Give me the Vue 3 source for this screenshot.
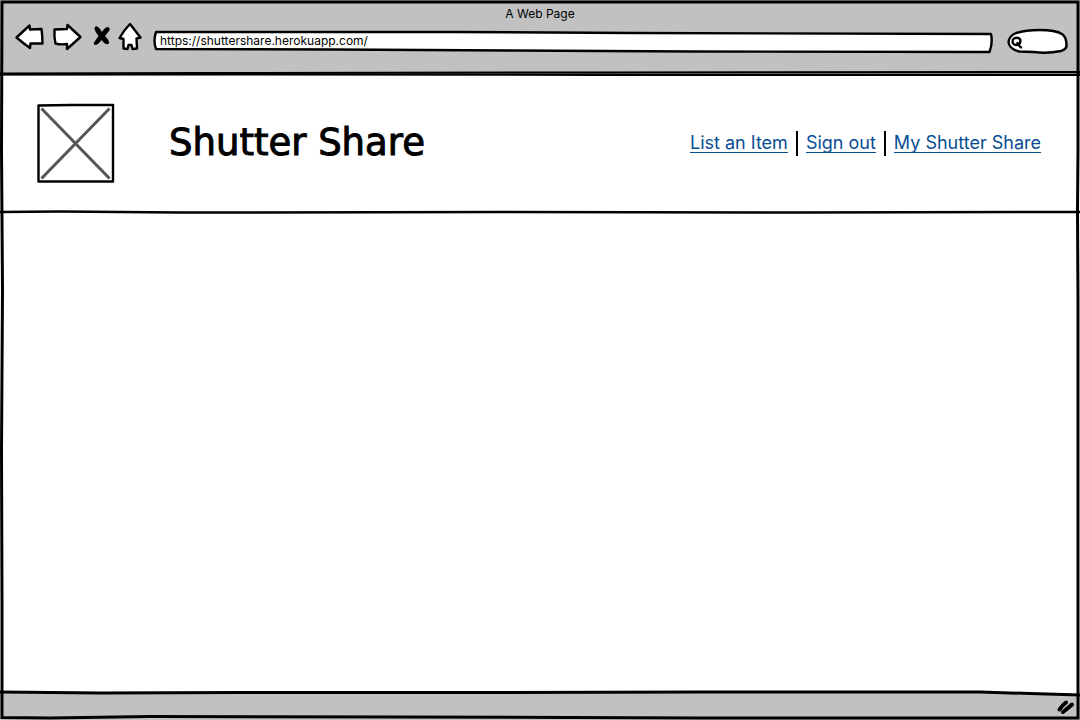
<script setup>
import { ref } from 'vue'

const address = ref('https://shuttershare.herokuapp.com/')
const query = ref('')
const links = ['List an Item', 'Sign out', 'My Shutter Share']
</script>

<template>
  <div class="window">
    <svg class="frame" viewBox="0 0 1080 720" preserveAspectRatio="none" aria-hidden="true">
      <path d="M2 2 L400 2 L1078 2 L1078 150 L1077.500 210 L1078 300 L1078 718 L700 718 L400 717 L150 716.500 L50 718 L2 717.500 L2 600 L1.500 450 L2.500 290 L1.500 150 Z" />
    </svg>

    <header class="toolbar">
      <div class="window-title">A Web Page</div>
      <div class="controls">
        <div class="buttons">
          <button type="button" aria-label="Back">
            <svg width="28" height="30" viewBox="15 22 28 30">
              <path class="outline" d="M16.500 37.500 L29.500 25.500 L30 29.500 L41.500 29 Q42.500 36 42.500 43.500 L30.500 43.500 L30 48 Q23 43 16.500 37.500 Z" />
            </svg>
          </button>
          <button type="button" aria-label="Forward">
            <svg width="32" height="30" viewBox="52 22 32 30">
              <path class="outline" d="M54.500 29.500 L67 29 L67.500 25 L80.500 37 L67 49 L67 44 Q61 45 55.500 43.500 Q54 37 54.500 29.500 Z" />
            </svg>
          </button>
          <button type="button" aria-label="Stop">
            <svg width="16" height="30" viewBox="93 22 16 30">
              <path d="M95 27 Q97 25 100 29 L102 32 Q105 27 108 27 Q111 28 109 31 L105 36 Q110 41 109 43.500 Q106 46 101.500 40 Q98 45 95 45 Q92.500 44 95 41 L98.500 36 Q93 29 95 27 Z" />
            </svg>
          </button>
          <button type="button" aria-label="Home">
            <svg width="24" height="30" viewBox="118 22 24 30">
              <path class="outline" d="M130 24 L140.500 37.500 L136.500 38.500 L137 48.500 L132.500 49 L131.500 45 L128.500 45 L127.500 49 L123.500 48.500 L123.500 39 L119.500 38 Q124 30 130 24 Z" />
            </svg>
          </button>
        </div>

        <div class="address">
          <svg class="shape" viewBox="0 0 840 24" preserveAspectRatio="none" aria-hidden="true">
            <path class="outline" d="M3 3 L300 3 L480 4 L838 5 Q840 14 836.500 23 L540 22.500 L360 21.500 L180 20.500 L3 20 Q0 12 3 3 Z" />
          </svg>
          <input v-model="address" type="text" aria-label="Address" spellcheck="false" />
        </div>

        <div class="search">
          <svg class="shape" viewBox="0 0 60 27" preserveAspectRatio="none" aria-hidden="true">
            <path class="outline" d="M9 5 Q18 2 32 2 Q48 2 54 6 Q58.500 9 58.500 17 Q59 21 53 23 Q40 26 26 24 L12 23.500 Q2 21 1.500 14 Q2 8 9 5 Z" />
          </svg>
          <svg class="lens" width="12" height="14" viewBox="0 0 12 14" aria-hidden="true">
            <path class="outline" d="M3 2.500 Q7 0.500 9.200 3.500 Q10 7 7.500 8.500 Q3.500 10 1.800 7 Q1 3.500 3 2.500 Z M6.500 7 L7.500 9 L10 11.500" />
          </svg>
          <input v-model="query" type="search" aria-label="Search" />
        </div>
      </div>
      <svg class="rule" viewBox="0 0 1080 6" preserveAspectRatio="none" aria-hidden="true">
        <path class="underlay" d="M0 4 H1080 V6 H0 Z" />
        <path class="between" d="M0 4.500 L250 4 L600 3.700 L1080 3.500" />
        <path class="thin" d="M0 3.500 L200 3 L600 2.500 L1080 2" />
        <path class="thin" d="M0 4.500 L250 4.500 L600 5 L1080 5" />
      </svg>
    </header>

    <section class="banner">
      <svg class="logo" width="78" height="80" viewBox="0 0 78 80" role="img" aria-label="Shutter Share logo">
        <path class="outline" d="M2.500 2.500 L35 2 H77 V78.500 H2.500 Z" />
        <path class="cross" d="M5.500 5.500 L73.500 75.500 M73.500 5.500 L5.500 75.500" />
      </svg>
      <h1>Shutter Share</h1>
      <nav aria-label="Account">
        <ul>
          <li v-for="link in links" :key="link"><a href="#">{{ link }}</a></li>
        </ul>
      </nav>
    </section>
    <svg class="rule divider" viewBox="0 0 1080 6" preserveAspectRatio="none" aria-hidden="true">
      <path class="line" d="M0 3 L60 2.500 L180 3.500 L500 3 L800 3.500 L1080 3" />
    </svg>

    <main></main>

    <footer>
      <svg class="rule top-rule" viewBox="0 0 1080 6" preserveAspectRatio="none" aria-hidden="true">
        <path class="page" d="M0 0 H1080 V5 L960 2 H0 Z" />
        <path class="line" d="M0 2 L100 3 L240 2.500 L500 2.500 L700 2 L980 2 L1030 3.500 L1080 5" />
      </svg>
      <svg class="grip" width="18" height="14" viewBox="0 0 18 14" aria-hidden="true">
        <path d="M2.500 9.500 Q5 5.500 9 2.500 M6 12 Q10 9 15 4.500" />
      </svg>
    </footer>
  </div>
</template>

<style>
body {
  margin: 0;
  background: #fff;
}
</style>

<style scoped>
.window {
  position: relative;
  display: flex;
  flex-direction: column;
  min-height: 100vh;
  color: #000;
  font-family: Inter, sans-serif;
  background: #fff;
}

svg {
  display: block;
  overflow: visible;
}

.frame {
  position: absolute;
  inset: 0;
  width: 100%;
  height: 100%;
  pointer-events: none;
  z-index: 2;
}

.frame path {
  fill: none;
  stroke: #000;
  stroke-width: 3;
  vector-effect: non-scaling-stroke;
}

.toolbar {
  background: #c1c1c1;
}

.window-title {
  padding-top: 6px;
  font-size: 12px;
  line-height: 16px;
  text-align: center;
}

.controls {
  display: flex;
  align-items: flex-start;
  padding: 0 12px 15px 15px;
}

.buttons {
  display: flex;
  gap: 9px;
}

.buttons button {
  padding: 0;
  border: 0;
  background: none;
}

.outline {
  fill: #fff;
  stroke: #000;
  stroke-width: 2.4;
  stroke-linejoin: round;
  stroke-linecap: round;
}

.address {
  position: relative;
  flex: 1;
  height: 24px;
  margin: 7px 14px 0 11px;
}

.shape {
  position: absolute;
  inset: 0;
  width: 100%;
  height: 100%;
}

input {
  position: relative;
  box-sizing: border-box;
  width: 100%;
  border: 0;
  outline: 0;
  background: none;
  color: #000;
  font-family: Inter, sans-serif;
  font-size: 12px;
}

.address input {
  height: 24px;
  padding: 0 8px 1px 7px;
}

.search {
  position: relative;
  width: 61px;
  height: 27px;
  margin-top: 6px;
}

.search input {
  height: 27px;
  padding: 0 6px 0 20px;
  appearance: none;
}

.lens {
  position: absolute;
  left: 4px;
  top: 8px;
}

.rule {
  width: 100%;
  height: 6px;
}

.rule path {
  vector-effect: non-scaling-stroke;
}

.rule .underlay,
.rule .page {
  fill: #fff;
}

.between {
  fill: none;
  stroke: #808080;
  stroke-width: 2;
}

.thin {
  fill: none;
  stroke: #000;
  stroke-width: 2;
}

.line {
  fill: none;
  stroke: #000;
  stroke-width: 2.5;
}

.banner {
  display: flex;
  align-items: center;
  padding: 27px 39px 26px 36px;
}

.logo {
  flex: none;
}

.logo .cross {
  fill: none;
  stroke: #555;
  stroke-width: 3;
}

h1 {
  margin: 0 0 0 55px;
  font-family: "DejaVu Sans", sans-serif;
  font-size: 37px;
  font-weight: 400;
  line-height: 48px;
  -webkit-text-stroke: 1px #000;
}

nav {
  margin-left: auto;
}

ul {
  display: flex;
  margin: 0;
  padding: 0;
  list-style: none;
}

li {
  display: flex;
  align-items: center;
  height: 25px;
}

li + li {
  margin-left: 8px;
  padding-left: 8px;
  border-left: 2px solid #000;
}

a {
  border-bottom: 1px solid #084d94;
  color: #084d94;
  font-size: 18px;
  line-height: 18px;
  text-decoration: none;
}

main {
  flex: 1;
}

footer {
  position: relative;
  height: 30px;
  background: #c1c1c1;
}

.top-rule .line {
  stroke-width: 3;
}

.grip {
  position: absolute;
  right: 5px;
  bottom: 6px;
}

.grip path {
  fill: none;
  stroke: #000;
  stroke-width: 4;
  stroke-linecap: round;
}
</style>
